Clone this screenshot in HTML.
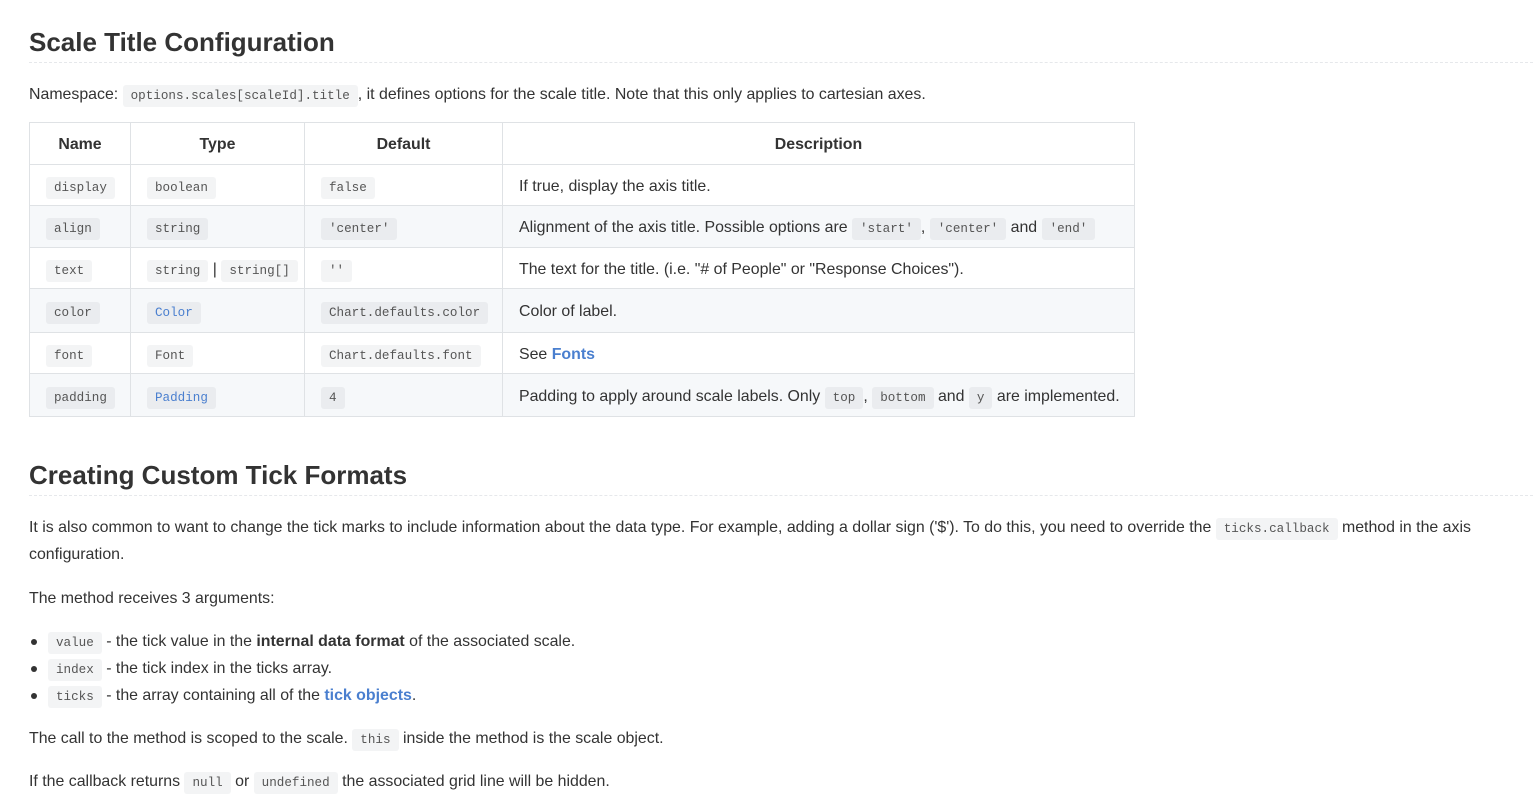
<!DOCTYPE html>
<html><head><meta charset="utf-8"><style>
body{margin:0;background:#fff;color:#333;font-family:"Liberation Sans",sans-serif;font-size:15.9px;}
.a{position:absolute;left:29px;white-space:nowrap;}
h2{position:absolute;left:29px;margin:0;font-size:26px;font-weight:bold;color:#333;}
.hr{position:absolute;left:29px;right:0;border-top:1px dashed #e6e8eb;height:0}
code{font-family:"Liberation Mono",monospace;font-size:12.6px;background:#f3f4f5;color:#555;padding:4px 8px;border-radius:3px;}
.s code{background:#eaecef}
a{color:#4a7fcf;text-decoration:none;font-weight:bold}
table{position:absolute;left:29px;top:122px;border-collapse:collapse;table-layout:fixed;width:1105px}
td,th{border:1px solid #dfe2e5;padding:3px 16px 0;white-space:nowrap;overflow:hidden}
th{font-weight:bold;height:38px;text-align:center}
tr.s{background:#f6f8fa}
.b{position:absolute;left:29px;white-space:nowrap}
.b:before{content:"";position:absolute;left:2px;top:6px;width:6px;height:6px;border-radius:50%;background:#333}
</style></head><body>
<h2 style="top:27px">Scale Title Configuration</h2>
<div class="hr" style="top:62px"></div>
<div class="a" style="top:86px">Namespace: <code>options.scales[scaleId].title</code>, it defines options for the scale title. Note that this only applies to cartesian axes.</div>
<table>
<colgroup><col style="width:101px"><col style="width:174px"><col style="width:198px"><col style="width:632px"></colgroup>
<tr><th>Name</th><th>Type</th><th>Default</th><th>Description</th></tr>
<tr style="height:41px"><td><code>display</code></td><td><code>boolean</code></td><td><code>false</code></td><td>If true, display the axis title.</td></tr>
<tr class="s" style="height:42px"><td><code>align</code></td><td><code>string</code></td><td><code>'center'</code></td><td>Alignment of the axis title. Possible options are <code>'start'</code>, <code>'center'</code> and <code>'end'</code></td></tr>
<tr style="height:41px"><td><code>text</code></td><td><code>string</code> | <code>string[]</code></td><td><code>''</code></td><td>The text for the title. (i.e. "# of People" or "Response Choices").</td></tr>
<tr class="s" style="height:44px"><td><code>color</code></td><td><code style="color:#4a7fcf">Color</code></td><td><code>Chart.defaults.color</code></td><td>Color of label.</td></tr>
<tr style="height:41px"><td><code>font</code></td><td><code>Font</code></td><td><code>Chart.defaults.font</code></td><td>See <a>Fonts</a></td></tr>
<tr class="s" style="height:43px"><td><code>padding</code></td><td><code style="color:#4a7fcf">Padding</code></td><td><code>4</code></td><td>Padding to apply around scale labels. Only <code>top</code>, <code>bottom</code> and <code>y</code> are implemented.</td></tr>
</table>
<h2 style="top:460px">Creating Custom Tick Formats</h2>
<div class="hr" style="top:495px"></div>
<div class="a" style="top:519px">It is also common to want to change the tick marks to include information about the data type. For example, adding a dollar sign ('$'). To do this, you need to override the <code>ticks.callback</code> method in the axis</div>
<div class="a" style="top:546px">configuration.</div>
<div class="a" style="top:590px">The method receives 3 arguments:</div>
<div class="b" style="top:633px"><span style="margin-left:19px"><code>value</code> - the tick value in the <b>internal data format</b> of the associated scale.</span></div>
<div class="b" style="top:660px"><span style="margin-left:19px"><code>index</code> - the tick index in the ticks array.</span></div>
<div class="b" style="top:687px"><span style="margin-left:19px"><code>ticks</code> - the array containing all of the <a>tick objects</a>.</span></div>
<div class="a" style="top:730px">The call to the method is scoped to the scale. <code>this</code> inside the method is the scale object.</div>
<div class="a" style="top:773px">If the callback returns <code>null</code> or <code>undefined</code> the associated grid line will be hidden.</div>
</body></html>
